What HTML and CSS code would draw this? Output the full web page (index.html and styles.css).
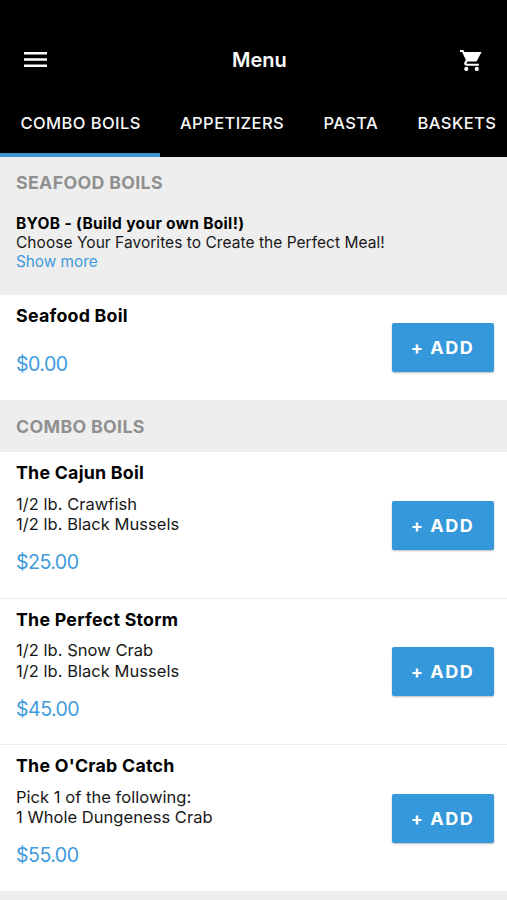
FILE: index.html
```html
<!DOCTYPE html>
<html lang="en">
<head>
<meta charset="utf-8">
<title>Menu</title>
<link rel="stylesheet" href="styles.css">
</head>
<body>
<header class="top">
  <div class="bar">
    <svg class="burger" viewBox="0 0 23 15"><path d="M0 0h23v2.5H0zM0 6.2h23v2.5H0zM0 12.4h23v2.5H0z"/></svg>
    <h1>Menu</h1>
    <svg class="cart" viewBox="1 2 21 20"><path d="M1 2v2h2l3.6 7.6-1.4 2.4c-.8 1.4.2 3 1.8 3h12v-2H7.4l-.2-.4.9-1.6h7.5c.7 0 1.4-.4 1.7-1L21.6 4H5.2l-.9-2z"/><circle cx="7" cy="20" r="2"/><circle cx="17" cy="20" r="2"/></svg>
  </div>
  <nav class="tabs">
    <a class="tab active">COMBO BOILS</a>
    <a class="tab">APPETIZERS</a>
    <a class="tab">PASTA</a>
    <a class="tab">BASKETS</a>
  </nav>
</header>
<main>
  <section class="intro">
    <h2>SEAFOOD BOILS</h2>
    <p class="lead">BYOB - (Build your own Boil!)</p>
    <p class="choose">Choose Your Favorites to Create the Perfect Meal!</p>
    <a class="more">Show more</a>
  </section>
  <article class="item short">
    <div class="info"><h3>Seafood Boil</h3><div class="price">$0.00</div></div>
    <button class="add">+ ADD</button>
  </article>
  <h2 class="group">COMBO BOILS</h2>
  <article class="item">
    <div class="info"><h3>The Cajun Boil</h3><p>1/2 lb. Crawfish<br>1/2 lb. Black Mussels</p><div class="price">$25.00</div></div>
    <button class="add">+ ADD</button>
  </article>
  <article class="item">
    <div class="info"><h3>The Perfect Storm</h3><p>1/2 lb. Snow Crab<br>1/2 lb. Black Mussels</p><div class="price">$45.00</div></div>
    <button class="add">+ ADD</button>
  </article>
  <article class="item">
    <div class="info"><h3>The O'Crab Catch</h3><p>Pick 1 of the following:<br>1 Whole Dungeness Crab</p><div class="price">$55.00</div></div>
    <button class="add">+ ADD</button>
  </article>
</main>
</body>
</html>
```
FILE: styles.css
```css
* { box-sizing: border-box; margin: 0; padding: 0; }
body { width: 507px; height: 900px; overflow: hidden; background: #eee; color: #000; font-family: Inter, "Liberation Sans", sans-serif; }
.top { height: 157px; padding-top: 30px; background: #000; color: #f8f8f8; }
.bar { height: 60px; padding: 0 25px 0 24px; display: flex; align-items: center; }
.bar svg { fill: #fff; }
.burger { width: 23px; height: 15px; margin-top: -1px; }
.cart { width: 22px; height: 21px; margin-left: auto; }
h1 { margin-left: 185px; font-size: 20px; font-weight: 600; line-height: 24px; }
.tabs { height: 67px; padding-left: 0.5px; display: flex; overflow: hidden; }
.tab { flex: none; padding: 0 19.3px 0 20px; font-size: 16.5px; font-weight: 500; line-height: 67px; letter-spacing: 0.42px; white-space: nowrap; }
.active { width: 160px; margin-left: -0.5px; padding-left: 20.5px; border-bottom: 4px solid #3f96d5; }
.intro { height: 138px; padding: 15px 16px 0; font-size: 15.5px; line-height: 19px; }
h2 { font-size: 17.8px; font-weight: 700; line-height: 22px; letter-spacing: 0.32px; color: #909090; }
.intro h2 { margin-bottom: 20px; }
.lead { font-weight: 700; letter-spacing: 0.33px; }
.choose { color: #181818; letter-spacing: 0.04px; }
.more { color: #3f9bdc; font-size: 15.3px; }
.item { height: 146.5px; padding: 10px 13.5px 0 16px; display: flex; justify-content: space-between; background: #fff; border-bottom: 1px solid #ececec; }
.item.short { height: 105px; border: 0; }
h3 { font-size: 17.8px; font-weight: 700; line-height: 22px; letter-spacing: 0.24px; }
.item p { margin-top: 9.5px; font-size: 16.5px; line-height: 20.8px; letter-spacing: 0.04px; color: #181818; }
.price { margin-top: 14px; font-size: 19.6px; line-height: 26px; letter-spacing: -0.55px; color: #3f9bdc; }
.short .price { margin-top: 23.5px; }
.add { width: 102px; height: 49px; margin-top: 38.5px; border: 0; border-radius: 2px; background: #3498db; color: #fff; font: 700 18px/49px Inter, sans-serif; letter-spacing: 1.5px; box-shadow: 0 1px 2px #0004; }
.short .add { margin-top: 18px; }
.group { height: 52px; padding: 16px 16px 0; }
```
